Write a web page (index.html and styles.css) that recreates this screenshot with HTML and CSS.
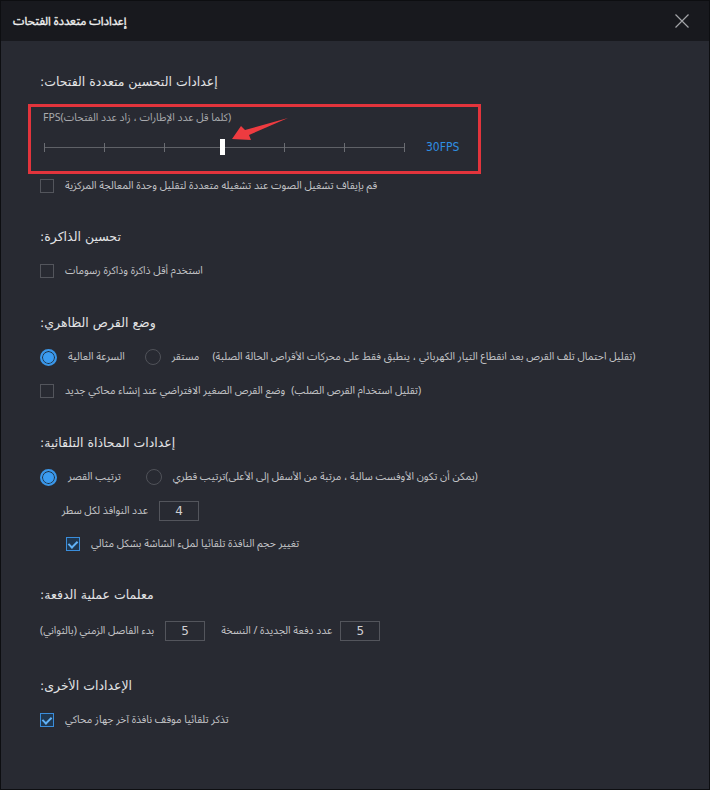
FILE: index.html
```html
<!DOCTYPE html>
<html lang="ar">
<head>
  <meta charset="utf-8" />
  <title>إعدادات متعددة الفتحات</title>
  <link rel="stylesheet" href="styles.css">
</head>
<body>
  <div class="window">
    <header class="titlebar">
      <span class="title" dir="rtl">إعدادات متعددة الفتحات</span>
      <svg class="close" width="16" height="16" viewBox="0 0 16 16">
        <path d="M1.5 1.5 L14.5 14.5 M14.5 1.5 L1.5 14.5" stroke="#a3a4a8" stroke-width="1.2" fill="none" />
      </svg>
    </header>

    <main class="content">
      <section class="group group-first">
        <h2 dir="rtl">إعدادات التحسين متعددة الفتحات:</h2>
        <div class="fps-box">
          <div class="fps-label" dir="rtl">(كلما قل عدد الإطارات ، زاد عدد الفتحات)FPS</div>
          <div class="slider-row">
            <div class="slider">
              <span class="tick"></span><span class="tick"></span><span class="tick"></span>
              <span class="tick"></span><span class="tick"></span><span class="tick"></span>
              <span class="tick"></span>
              <span class="handle"></span>
            </div>
            <span class="fps-value">30FPS</span>
          </div>
          <!-- red annotation arrow -->
          <svg class="arrow" width="64" height="30" viewBox="0 0 64 30">
            <polygon points="4,23 13,10 17,14 60,2 21,19 23,24" fill="#ee3b40" />
          </svg>
        </div>
        <label class="row row-short">
          <span class="check"></span>
          <span dir="rtl">قم بإيقاف تشغيل الصوت عند تشغيله متعددة لتقليل وحدة المعالجة المركزية</span>
        </label>
      </section>

      <section class="group group-second">
        <h2 dir="rtl">تحسين الذاكرة:</h2>
        <label class="row">
          <span class="check"></span>
          <span dir="rtl">استخدم أقل ذاكرة وذاكرة رسومات</span>
        </label>
      </section>

      <section class="group">
        <h2 dir="rtl">وضع القرص الظاهري:</h2>
        <div class="row">
          <span class="radio on"></span>
          <span dir="rtl">السرعة العالية</span>
          <span class="radio spaced"></span>
          <span dir="rtl">مستقر</span>
          <span class="hint" dir="rtl">(تقليل احتمال تلف القرص بعد انقطاع التيار الكهربائي ، ينطبق فقط على محركات الأقراص الحالة الصلبة)</span>
        </div>
        <label class="row">
          <span class="check"></span>
          <span dir="rtl">وضع القرص الصغير الافتراضي عند إنشاء محاكي جديد</span>
          <span class="hint-near" dir="rtl">(تقليل استخدام القرص الصلب)</span>
        </label>
      </section>

      <section class="group">
        <h2 dir="rtl">إعدادات المحاذاة التلقائية:</h2>
        <div class="row">
          <span class="radio on"></span>
          <span dir="rtl">ترتيب القصر</span>
          <span class="radio spaced-wide"></span>
          <span dir="rtl">(يمكن أن تكون الأوفست سالبة ، مرتبة من الأسفل إلى الأعلى)ترتيب قطري</span>
        </div>
        <div class="row indent">
          <span class="field-label" dir="rtl">عدد النوافذ لكل سطر</span>
          <span class="field">4</span>
        </div>
        <label class="row indent row-tight">
          <span class="check on"></span>
          <span dir="rtl">تغيير حجم النافذة تلقائيا لملء الشاشة بشكل مثالي</span>
        </label>
      </section>

      <section class="group">
        <h2 dir="rtl">معلمات عملية الدفعة:</h2>
        <div class="row row-tall">
          <span dir="rtl">بدء الفاصل الزمني (بالثواني)</span>
          <span class="field">5</span>
          <span class="after-field" dir="rtl">عدد دفعة الجديدة / النسخة</span>
          <span class="field field-near">5</span>
        </div>
      </section>

      <section class="group group-last">
        <h2 dir="rtl">الإعدادات الأخرى:</h2>
        <label class="row">
          <span class="check on"></span>
          <span dir="rtl">تذكر تلقائيا موقف نافذة آخر جهاز محاكي</span>
        </label>
      </section>
    </main>
  </div>
</body>
</html>
```

FILE: styles.css
```css
* {
  box-sizing: border-box;
}
body {
  margin: 0;
  background: #111214;
  font-family: "Noto Sans Arabic", "DejaVu Sans", sans-serif;
}
.window {
  width: 710px;
  height: 790px;
  border: 1px solid #0d0e11;
  background: #282a32;
  color: #c4c5c8;
  display: flex;
  flex-direction: column;
}
.titlebar {
  height: 40px;
  flex: none;
  background: #18191e;
  display: flex;
  align-items: center;
  justify-content: space-between;
  padding: 0 19px 0 12px;
}
.title {
  color: #ececec;
  font-size: 11.5px;
  -webkit-text-stroke: 0.4px #ececec;
}
.content {
  padding: 31px 0 0 39px;
}
.group {
  margin-top: 25px;
}
.group-first {
  margin-top: 0;
}
.group-second {
  margin-top: 29px;
}
.group-last {
  margin-top: 26px;
}
h2 {
  margin: 0 0 7px;
  height: 20px;
  line-height: 20px;
  text-align: left;
  font-family: "DejaVu Sans", sans-serif;
  font-size: 12.5px;
  font-weight: normal;
  color: #e2e3e5;
}
.group-first h2 {
  margin-bottom: 12px;
}
.fps-box {
  position: relative;
  width: 453px;
  height: 70px;
  margin-left: -12px;
  border: 3px solid #e2343c;
  padding: 3px 0 0 12px;
  line-height: 16px;
}
.fps-label {
  height: 16px;
  line-height: 16px;
  text-align: left;
  font-size: 10.5px;
  color: #a9aaae;
}
.slider-row {
  display: flex;
  align-items: center;
  height: 18px;
  margin-top: 12px;
  padding-left: 1px;
}
.slider {
  position: relative;
  width: 361px;
  height: 18px;
  display: flex;
  align-items: center;
  justify-content: space-between;
  background: linear-gradient(#5f6167, #5f6167) center / 100% 1px no-repeat;
}
.tick {
  width: 1px;
  height: 9px;
  background: #6a6c72;
}
.handle {
  position: absolute;
  left: 176px;
  top: 1px;
  width: 5px;
  height: 16px;
  background: #ffffff;
}
.fps-value {
  margin-left: 21px;
  font-size: 12px;
  color: #2f8fe2;
  font-family: "DejaVu Sans Condensed", "DejaVu Sans", sans-serif;
}
.arrow {
  position: absolute;
  left: 197px;
  top: 9px;
}
.row {
  display: flex;
  align-items: center;
  height: 34px;
  font-size: 10.5px;
  white-space: nowrap;
  gap: 11px;
}
.row-short {
  height: 24px;
}
.row-tight {
  height: 32px;
}
.row-tall {
  height: 38px;
}
.indent {
  padding-left: 26px;
}
.check {
  width: 14px;
  height: 14px;
  flex: none;
  border: 1px solid #53555c;
  position: relative;
}
.check.on {
  border-color: #3a8ddb;
  background: #1f3750;
}
.check.on::after {
  content: "";
  position: absolute;
  left: 3px;
  top: 1px;
  width: 4px;
  height: 7px;
  border: solid #62b2f6;
  border-width: 0 2px 2px 0;
  transform: rotate(45deg);
}
.radio {
  width: 16px;
  height: 16px;
  flex: none;
  border-radius: 50%;
  border: 1px solid #505259;
}
.radio.on {
  border: 2px solid #3a96e8;
  background: #3b9cf1;
  box-shadow: inset 0 0 0 1px #1f2a38;
  width: 17px;
  height: 17px;
}
.spaced {
  margin-left: 9px;
}
.spaced-wide {
  margin-left: 14px;
}
.hint {
  margin-left: 2px;
}
.hint-near {
  margin-left: -5px;
}
.field-label {
  width: 82px;
}
.field {
  width: 40px;
  height: 20px;
  flex: none;
  border: 1px solid #53555c;
  text-align: center;
  line-height: 18px;
  font-family: "DejaVu Sans", sans-serif;
  font-size: 12px;
  color: #d0d0d2;
}
.field-near {
  margin-left: -3px;
}
.after-field {
  margin-left: 5px;
}
```
